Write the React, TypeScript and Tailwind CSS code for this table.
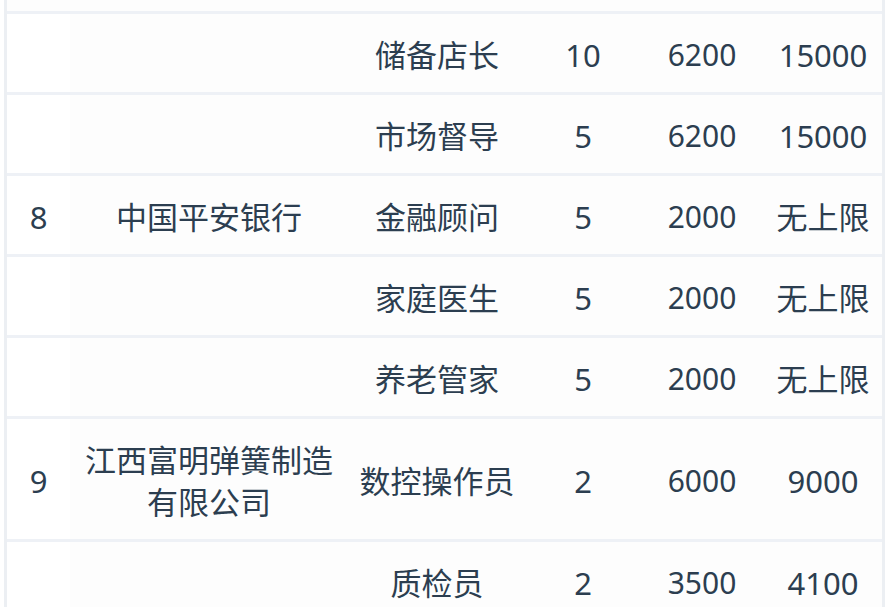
type Row = { idx?: string; company?: string; job: string; count: string; min: string; max: string };

const rows: Row[] = [
  { job: "储备店长", count: "10", min: "6200", max: "15000" },
  { job: "市场督导", count: "5", min: "6200", max: "15000" },
  { idx: "8", company: "中国平安银行", job: "金融顾问", count: "5", min: "2000", max: "无上限" },
  { job: "家庭医生", count: "5", min: "2000", max: "无上限" },
  { job: "养老管家", count: "5", min: "2000", max: "无上限" },
  { idx: "9", company: "江西富明弹簧制造有限公司", job: "数控操作员", count: "2", min: "6000", max: "9000" },
  { job: "质检员", count: "2", min: "3500", max: "4100" },
];

const cols = "grid grid-cols-[63px_278px_178px_114px_124px_1fr]";

export default function App() {
  return (
    <div
      className="h-[607px] w-[888px] overflow-hidden bg-white text-[#2c3e50]"
      style={{ fontFamily: '"Noto Sans", "Noto Sans CJK SC", sans-serif' }}
    >
      <div className="ml-[4px] mr-[3px] border-x-[3px] border-[#eceff3] bg-[#fdfdfd]">
        <div className="h-[11px]" />
        {rows.map((r, i) => (
          <div key={i} className={`${cols} items-center border-t-[3px] border-[#eef1f6] text-[31px] leading-[42px]`}>
            <div className="bg-white pt-[20px] pb-[16px] text-center self-stretch flex items-center justify-center">{r.idx}</div>
            <div className="px-[10px] pt-[20px] pb-[16px] text-center">{r.company}</div>
            <div className="pt-[20px] pb-[16px] text-center">{r.job}</div>
            <div className="pt-[20px] pb-[16px] text-center">{r.count}</div>
            <div className="pt-[20px] pb-[16px] text-center text-[30px]">{r.min}</div>
            <div className="pt-[20px] pb-[16px] text-center">{r.max}</div>
          </div>
        ))}
      </div>
    </div>
  );
}
